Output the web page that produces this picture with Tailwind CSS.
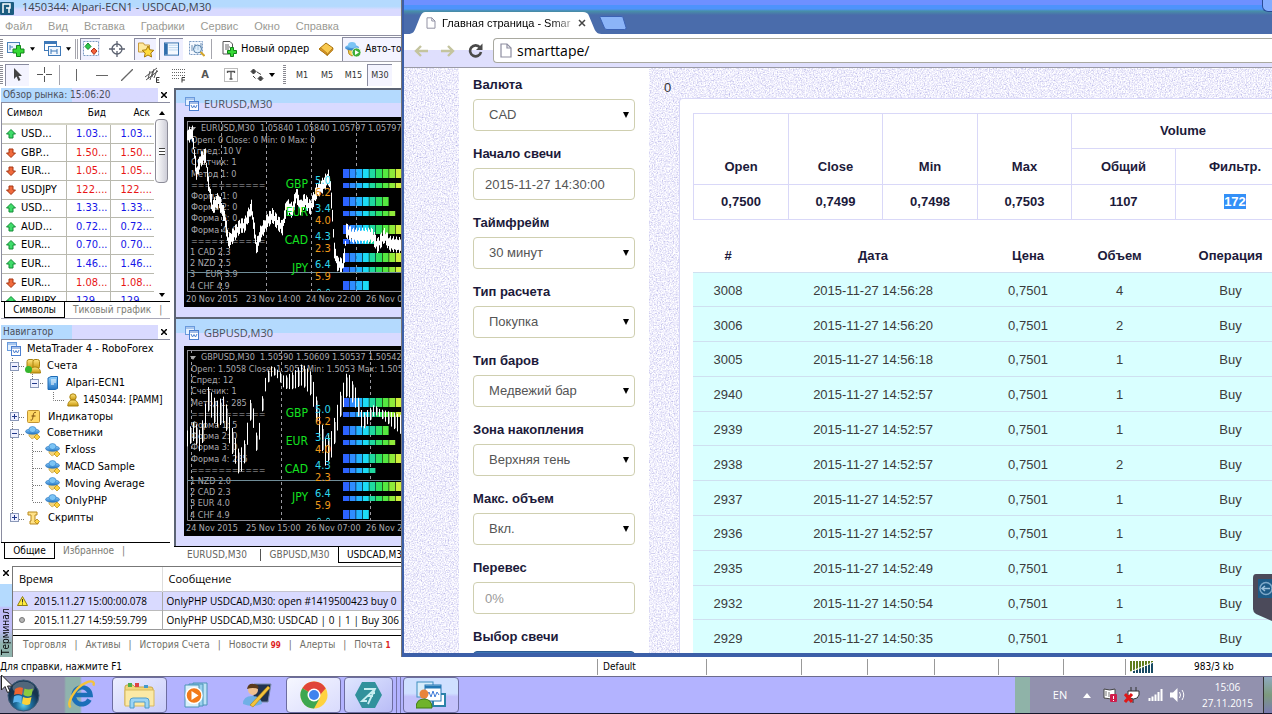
<!DOCTYPE html>
<html lang="ru">
<head>
<meta charset="utf-8">
<title>Главная страница - SmartTape</title>
<script src="https://cdn.jsdelivr.net/npm/@tailwindcss/browser@4"></script>
</head>
<body class="h-screen overflow-hidden bg-white font-['Open_Sans','Noto_Sans',sans-serif] text-[11px] leading-4 text-black">
<svg width="0" height="0" class="absolute">
  <defs>
    <filter id="grain" x="0" y="0" width="100%" height="100%">
      <feTurbulence type="fractalNoise" baseFrequency="0.75" numOctaves="3" seed="4"/>
      <feColorMatrix values="0.9 0.3 0 0 0.26  0.9 0.3 0 0 0.25  0.45 0.1 0 0 0.7  0 0 0 0 1"/>
    </filter>
    <linearGradient id="gold" x2="0" y2="1"><stop stop-color="#ffe680"/><stop offset="1" stop-color="#c8960c"/></linearGradient>
    <linearGradient id="sky" x2="0" y2="1"><stop stop-color="#8fd0ff"/><stop offset="1" stop-color="#2375c4"/></linearGradient>
    <radialGradient id="orb" cy=".8"><stop stop-color="#5fd0ee"/><stop offset=".5" stop-color="#1c6b9c"/><stop offset="1" stop-color="#16344f"/></radialGradient>
  </defs>
  <symbol id="up" viewBox="0 0 10 10"><path d="M5 .5 9.500 5H7v4H3V5H.5z" fill="#3fdc6a" stroke="#128a35"/></symbol>
  <symbol id="down" viewBox="0 0 10 10"><path d="M5 9.500.5 5H3V1h4v4h2.500z" fill="#f06a3c" stroke="#a53413"/></symbol>
  <symbol id="charts" viewBox="0 0 14 14"><rect x=".5" y=".5" width="9" height="8" fill="#e4f1ff" stroke="#6a9bdd"/><path d="M.5 2h9" stroke="#6a9bdd"/><rect x="4.500" y="4.500" width="9" height="9" fill="#fff" stroke="#4b7fd0"/><path d="M4.500 6h9M6 8l1.500 3L9 8.500l1.500 2.500L12 8" stroke="#4b7fd0" fill="none"/></symbol>
  <symbol id="hat" viewBox="0 0 16 14"><path d="M4 7h7l1 3-5 3-3-3z" fill="#f2d27a" stroke="#c29b35" stroke-width=".6"/><ellipse cx="7.500" cy="5.500" rx="7" ry="2.800" fill="url(#sky)" stroke="#1e6bb5" stroke-width=".6"/><ellipse cx="7.500" cy="3.500" rx="3.500" ry="3" fill="#7cc4f5" stroke="#2a7bc4" stroke-width=".6"/><path d="m12 8 3 3-3 3-3-3z" fill="#ffd23f" stroke="#b58a0c" stroke-width=".7"/></symbol>
  <symbol id="user" viewBox="0 0 12 14"><circle cx="6" cy="4" r="3.200" fill="url(#gold)" stroke="#a9820f"/><path d="M.8 13c0-4 2-6 5.200-6s5.200 2 5.200 6z" fill="url(#gold)" stroke="#a9820f"/></symbol>
  <symbol id="minusbox" viewBox="0 0 9 9"><rect x=".5" y=".5" width="8" height="8" fill="#eef0ff" stroke="#8a98b8"/><path d="M2 4.500h5" stroke="#223a8a"/></symbol>
  <symbol id="plusbox" viewBox="0 0 9 9"><rect x=".5" y=".5" width="8" height="8" fill="#eef0ff" stroke="#8a98b8"/><path d="M2 4.500h5M4.500 2v5" stroke="#223a8a"/></symbol>
  <symbol id="drop" viewBox="0 0 6 4"><path d="M0 0h6L3 4z"/></symbol>
  <symbol id="page" viewBox="0 0 12 15"><path d="M1 1h6l4 4v9H1z" fill="#fff" stroke="#8d8da0" stroke-width="1.200"/><path d="M7 1v4h4" fill="none" stroke="#8d8da0" stroke-width="1.200"/></symbol>
  <symbol id="grip" viewBox="0 0 3 20"><path d="M1.500 0v20" stroke="#8a8a92" stroke-width="3" stroke-dasharray="1 1"/></symbol>
</svg>

<div class="flex h-full flex-col">
 <div class="flex min-h-0 flex-1">

 <!-- MetaTrader -->
 <main class="flex w-[402px] shrink-0 flex-col overflow-hidden border-r border-[#777] bg-white font-['DejaVu_Sans_Condensed','Noto_Sans',sans-serif] text-[10px]">
  <header class="flex h-4 shrink-0 items-center gap-2 bg-gradient-to-b from-[#b4dafe] from-40% to-[#d9daff] to-60% font-['Open_Sans','Noto_Sans',sans-serif] text-[11px] leading-3 text-[#3c4250]">
   <svg class="h-[13px] w-[14px]" viewBox="0 0 14 13"><rect width="14" height="13" rx="1" fill="#1c5c80"/><path d="M3 11V2h7v4H6M9 6v5" stroke="#fff" stroke-width="1.500" fill="none"/></svg>
   <h1 class="pb-0.5 whitespace-nowrap">1450344: Alpari-ECN1 - USDCAD,M30</h1>
  </header>
  <nav class="flex h-5 shrink-0 items-center gap-4 border-b border-[#8e8ea0] pl-[5px] font-['Liberation_Sans',sans-serif] text-[11px] text-[#9a9a94]">
   <button>Файл</button><button>Вид</button><button>Вставка</button><button>Графики</button><button>Сервис</button><button>Окно</button><button>Справка</button>
  </nav>
  <div class="flex h-[26px] shrink-0 items-center border-b border-[#a5a5ad] text-[11px]">
   <svg class="h-5 w-[3px] shrink-0"><use href="#grip"/></svg>
   <button class="flex w-9 shrink-0 items-center justify-center gap-[5px]" aria-label="Новый график"><svg class="h-4 w-[18px]" viewBox="0 0 18 16"><rect x=".5" y="1.500" width="12" height="10" fill="#eaf4ff" stroke="#4b82b8"/><path d="M3 4v5M3 6h3" stroke="#4b82b8"/><path d="M9.500 4.500h4v3.500H17v4h-3.500V15.500h-4V12H6V8h3.500z" fill="#35d935" stroke="#12841a"/></svg><svg class="h-1 w-[5px]"><use href="#drop"/></svg></button>
   <button class="flex w-9 shrink-0 items-center justify-center gap-[5px]" aria-label="Профили"><svg class="h-4 w-[17px]" viewBox="0 0 17 16"><rect x=".5" y=".5" width="12" height="9" fill="#fff" stroke="#3d78b8"/><path d="M1 2h11" stroke="#3d78b8" stroke-width="2"/><rect x="4.500" y="5.500" width="12" height="9" fill="#f2f8ff" stroke="#3d78b8"/><path d="M7 8v5M7 10h6M13 8v5" stroke="#3d78b8"/></svg><svg class="h-1 w-[5px]"><use href="#drop"/></svg></button>
   <div class="mr-0.5 h-5 w-[3px] shrink-0 border-x border-[#a5a5ad]"></div>
   <button class="flex h-[22px] w-5 shrink-0 items-center justify-center border-t border-l border-[#8a8ca0] bg-[#f0f0ff]" aria-label="Обзор рынка"><svg class="h-4 w-4" viewBox="0 0 16 16"><rect x=".5" y=".5" width="15" height="14" fill="#fff" stroke="#7c9cc4" stroke-dasharray="2 1"/><path d="m5 2 3 3.500-3 3L2 5.500z" fill="#2fca4c" stroke="#16862c"/><path d="m11 7 3 3-3 3.500L8 10z" fill="#f2603a" stroke="#b0301a"/></svg></button>
   <button class="flex w-[34px] shrink-0 justify-center" aria-label="Окно данных"><svg class="h-4 w-4" viewBox="0 0 16 16" fill="none" stroke="#5c6270"><circle cx="8" cy="8" r="5" stroke-width="1.300"/><path d="M8 0v6M8 10v6M0 8h6M10 8h6" stroke-width="1.300"/></svg></button>
   <button class="flex h-[22px] w-[22px] shrink-0 items-center justify-center border-t border-l border-[#8a8ca0] bg-[#f0f0ff]" aria-label="Навигатор"><svg class="h-[18px] w-[18px]" viewBox="0 0 18 18"><path d="M1.500 3h5l1 2h5v7h-11z" fill="#ffe9a0" stroke="#c79a3b"/><path d="m11 6 1.800 3.800 4 .5-3 2.700.8 4-3.600-2-3.600 2 .8-4-3-2.700 4-.5z" fill="#ffdb3c" stroke="#a87808"/></svg></button>
   <button class="ml-[3px] flex h-[22px] w-6 shrink-0 items-center justify-center border-t border-l border-[#8a8ca0] bg-[#f0f0ff]" aria-label="Терминал"><svg class="h-[15px] w-[15px]" viewBox="0 0 16 15"><rect x=".5" y=".5" width="15" height="13" fill="#f5f9ff" stroke="#2f6dac"/><path d="M2.500 1v12" stroke="#2f6dac" stroke-width="3"/><path d="M5 3h10M5 5.500h10M5 8h10" stroke="#b8d4f0"/></svg></button>
   <button class="flex w-7 shrink-0 justify-center" aria-label="Тестер"><svg class="h-4 w-4" viewBox="0 0 16 16"><rect x=".5" y=".5" width="13" height="13" fill="#f5f9ff" stroke="#7c9cc4" stroke-dasharray="2 1"/><path d="M3 4v6M6 3v5M9 4v5M12 2v5" stroke="#6d8db0"/><circle cx="8.500" cy="8" r="4" fill="#cfe6fa99" stroke="#5580a8"/><path d="m11.500 11 4 4" stroke="#d4a52a" stroke-width="2"/></svg></button>
   <div class="h-5 shrink-0 border-l border-[#a5a5ad]"></div>
   <button class="ml-2.5 flex shrink-0 items-center gap-1 whitespace-nowrap"><svg class="h-4 w-[15px]" viewBox="0 0 15 16"><path d="M1 .5h7l2.500 2.500v10H1z" fill="#fff" stroke="#555"/><path d="M3 4h4M3 6h5M3 8h4" stroke="#666"/><path d="M8.500 6.500h3v3h3v3h-3v3h-3v-3h-3v-3h3z" fill="#35d935" stroke="#12841a"/></svg>Новый ордер</button>
   <button class="flex w-[33px] shrink-0 justify-center" aria-label="Редактор"><svg class="h-4 w-4" viewBox="0 0 16 16"><path d="m1 8 7-6 7 5-6 7z" fill="#f9c94e" stroke="#a8720e"/><path d="m1 8 8 6v-2L3 7zM9 14l6-7v2l-6 6z" fill="#d9962a" stroke="#a8720e" stroke-width=".6"/></svg></button>
   <button class="flex h-6 min-w-0 flex-1 items-center gap-[3px] overflow-hidden border-t border-l border-[#8a8ca0] bg-[#f4f4ff] pl-px text-[10px] whitespace-nowrap"><svg class="h-[17px] w-[18px] shrink-0" viewBox="0 0 18 17"><path d="M4 8h8l1 4-5 3-3-2z" fill="#f5cf50" stroke="#b58a1c"/><ellipse cx="8" cy="6.500" rx="7" ry="3" fill="url(#sky)"/><ellipse cx="8" cy="4" rx="4" ry="3" fill="#7cc4f5"/><circle cx="12.500" cy="11.500" r="4.500" fill="#3fae39" stroke="#fff" stroke-width=".8"/><path d="m11 9 4 2.500-4 2.500z" fill="#fff"/></svg>Авто-то</button>
  </div>
  <div class="flex h-[25px] shrink-0 items-center text-[9px] text-[#333]">
   <svg class="h-5 w-[3px] shrink-0"><use href="#grip"/></svg>
   <button class="ml-0.5 flex h-[22px] w-6 items-center justify-center border-t border-l border-[#8a8ca0] bg-[#f4f4ff]" aria-label="Курсор"><svg class="h-[14px] w-2" viewBox="0 0 8 14"><path d="M0 0v11l2.500-2.500L4.500 13l2-1L4.500 8H8z" fill="#444"/></svg></button>
   <button class="flex w-[30px] justify-center" aria-label="Перекрестие"><svg class="h-[15px] w-[15px]" viewBox="0 0 15 15"><path d="M7.500 0v6M7.500 9v6M0 7.500h6M9 7.500h6" stroke="#555"/></svg></button>
   <div class="h-5 border-l border-[#a5a5ad]"></div>
   <button class="flex w-[31px] justify-center" aria-label="Вертикальная линия"><svg class="h-3 w-3" viewBox="0 0 12 12"><path d="M6.500 0v12" stroke="#666"/></svg></button>
   <button class="flex w-[22px] justify-center" aria-label="Горизонтальная линия"><svg class="h-3 w-3" viewBox="0 0 12 12"><path d="M0 6.500h12" stroke="#666"/></svg></button>
   <button class="flex w-7 justify-center" aria-label="Трендовая линия"><svg class="h-3 w-3" viewBox="0 0 12 12"><path d="M0 12 12 0" stroke="#666" stroke-width="1.300"/></svg></button>
   <button class="flex w-6 justify-center" aria-label="Канал"><svg class="h-4 w-4" viewBox="0 0 16 16"><path d="M0 10 12 1M1 13 13 4M3 12 5 4M7 10 9 2M5 13 8 4M9 11l3-8" stroke="#555" fill="none"/><path d="M14.500 10.500h-3v5h3M11.500 13H14" stroke="#333" fill="none"/></svg></button>
   <button class="flex w-7 justify-center" aria-label="Фибоначчи"><svg class="h-4 w-4" viewBox="0 0 16 16"><path d="M1 2.500h13M1 5.500h13M1 8.500h13M1 11.500h7" stroke="#666" stroke-dasharray="1 1"/><path d="M14 10.500h-3v5M11 13h3" stroke="#333" fill="none"/></svg></button>
   <button class="w-6 text-[11px] font-bold text-[#555]">A</button>
   <button class="flex w-7 justify-center" aria-label="Метка"><svg class="h-3.5 w-3.5" viewBox="0 0 14 14"><rect x=".5" y=".5" width="13" height="13" fill="none" stroke="#777" stroke-dasharray="1 1"/><path d="M3.500 5V3.500h7V5M7 3.500V11M5.500 11h3" stroke="#555" stroke-width="1.300" fill="none"/></svg></button>
   <button class="flex w-[34px] items-center justify-center gap-[5px]" aria-label="Стрелки"><svg class="h-3.5 w-3.5" viewBox="0 0 14 14"><path d="m3.500 1 2.500 2.500L3.500 6 1 3.500zM10.500 8l2.500 2.500-2.500 2.500L8 10.500zM3 8l2.500 2.500M7 4l4 2.500" fill="#444" stroke="#444"/></svg><svg class="h-1 w-1.5"><use href="#drop"/></svg></button>
   <svg class="mx-1 h-5 w-[3px] shrink-0"><use href="#grip"/></svg>
   <button class="w-6">M1</button><button class="w-[26px]">M5</button><button class="w-[27px]">M15</button><button class="h-[22px] w-[25px] border-t border-l border-[#8a8ca0] bg-[#f4f4ff]">M30</button>
  </div>

  <div class="flex min-h-0 flex-1">
   <div class="flex w-[170px] shrink-0 flex-col pl-px">
    <!-- Market watch -->
    <section class="flex h-[232px] shrink-0 flex-col border-b border-[#a9a9b8]">
     <div class="flex h-[15px] items-center justify-between pr-[3px] text-[#4a4f5c]"><h2 class="h-3.5 w-[157px] bg-gradient-to-r from-[#b4dafe] from-45% to-[#d9daff] to-45% pl-0.5 leading-[14px]">Обзор рынка: 15:06:20</h2><button aria-label="Закрыть"><svg class="h-1.5 w-1.5" viewBox="0 0 6 6"><path d="m0 0 6 6M6 0 0 6" stroke="#000" stroke-width="1.500"/></svg></button></div>
     <div class="flex min-h-0 flex-1 overflow-hidden border-t border-l border-[#8a8ca0]">
      <table class="h-[208px] w-[152px] table-fixed border-collapse text-right text-[11px]">
       <thead class="text-[10px]"><tr class="h-[21px] border-b-2 border-[#d5d5c8]"><th class="w-16 pl-[5px] text-left font-normal">Символ</th><th class="w-11 pr-1 font-normal">Бид</th><th class="w-11 pr-1 font-normal">Аск</th></tr></thead>
       <tbody id="quotes"></tbody>
      </table>
      <div class="flex w-[15px] flex-col items-center"><svg class="mt-2 h-1 w-1.5 rotate-180"><use href="#drop"/></svg><div class="mt-1 flex h-[64px] w-[13px] items-center justify-center rounded-sm border border-[#8c8c98] bg-gradient-to-r from-white to-[#ceced8]"><div class="h-[7px] w-1.5 border-y border-[#444] bg-[linear-gradient(#fff_2px,#444_2px,#444_3px,#fff_3px)]"></div></div><svg class="mt-auto mb-1 h-1 w-1.5"><use href="#drop"/></svg></div>
     </div>
     <div class="flex h-[17px] shrink-0 items-center border-t border-black pl-[3px] whitespace-nowrap text-[#7b7b74]"><button class="h-4 w-[61px] shrink-0 border-x border-b border-black bg-white leading-[14px] text-black">Символы</button><button class="px-2">Тиковый график</button>|</div>
    </section>
    <!-- Navigator -->
    <section class="mt-[5px] flex min-h-0 flex-1 flex-col">
     <div class="flex h-[15px] shrink-0 items-center justify-between pr-[3px] text-[#4a4f5c]"><h2 class="h-3.5 w-[157px] bg-gradient-to-r from-[#b4dafe] from-45% to-[#d9daff] to-45% pl-0.5 leading-[14px]">Навигатор</h2><button aria-label="Закрыть"><svg class="h-1.5 w-1.5" viewBox="0 0 6 6"><path d="m0 0 6 6M6 0 0 6" stroke="#000" stroke-width="1.500"/></svg></button></div>
     <div class="relative min-h-0 flex-1 overflow-hidden border-t border-l border-[#8a8ca0] pt-px">
      <svg class="absolute top-0 left-0 h-[200px] w-20" viewBox="0 0 80 200" fill="none" stroke="#777" stroke-dasharray="1 1"><path d="M10.500 18v162M17 26.500h6M30.500 34v8M36 43.500h6M51.500 52v8.500H63M17 77.500h6M17 94.500h6M30.500 102v60M31 111.500h10M31 128.500h10M31 145.500h10M31 162.500h10M17 179.500h6"/></svg>
      <ul class="relative grid h-[185px] auto-rows-fr text-[11px] whitespace-nowrap [&>li]:flex [&>li]:items-center">
       <li class="gap-1.5 pl-[5px]"><svg class="h-3.5 w-3.5"><use href="#charts"/></svg>MetaTrader 4 - RoboForex</li>
       <li class="gap-1.5 pl-2"><svg class="h-[9px] w-[9px]"><use href="#minusbox"/></svg><svg class="h-[15px] w-4" viewBox="0 0 16 15"><rect x="2" y=".5" width="7" height="9" rx="2" fill="url(#gold)" stroke="#a9820f"/><rect x="8" y=".5" width="6.500" height="9" rx="2" fill="url(#gold)" stroke="#a9820f"/><path d="M5 14c0-4 2-6 5-6s5.500 2 5.500 6z" fill="url(#gold)" stroke="#a9820f"/><circle cx="3.500" cy="10.500" r="3.500" fill="#35b52e"/></svg>Счета</li>
       <li class="gap-2 pl-7"><svg class="h-[9px] w-[9px]"><use href="#minusbox"/></svg><svg class="h-3.5 w-[11px]" viewBox="0 0 11 14"><path d="M1 2 4 .5h6.500v12L8 13.500H1z" fill="url(#sky)" stroke="#1e6bb5"/><path d="M4 4h5M4 6h5M4 8h3" stroke="#fff"/></svg>Alpari-ECN1</li>
       <li class="gap-1 pl-[65px]"><svg class="h-3.5 w-3"><use href="#user"/></svg><span class="text-[10px]">1450344: [PAMM]</span></li>
       <li class="gap-2 pl-2"><svg class="h-[9px] w-[9px]"><use href="#plusbox"/></svg><svg class="h-[13px] w-[13px]" viewBox="0 0 13 13"><rect x=".5" y=".5" width="12" height="12" rx="1" fill="#ffd965" stroke="#c29432"/><path d="M9 2.500c-2-.5-2.500.5-3 4s-1 4-2.500 3.500M4.500 6h4" stroke="#7a4b0a" fill="none"/></svg>Индикаторы</li>
       <li class="gap-1.5 pl-2"><svg class="h-[9px] w-[9px]"><use href="#minusbox"/></svg><svg class="h-3.5 w-4"><use href="#hat"/></svg>Советники</li>
       <li class="gap-1 pl-[43px]"><svg class="h-3.5 w-4"><use href="#hat"/></svg>Fxloss</li>
       <li class="gap-1 pl-[43px]"><svg class="h-3.5 w-4"><use href="#hat"/></svg>MACD Sample</li>
       <li class="gap-1 pl-[43px]"><svg class="h-3.5 w-4"><use href="#hat"/></svg>Moving Average</li>
       <li class="gap-1 pl-[43px]"><svg class="h-3.5 w-4"><use href="#hat"/></svg>OnlyPHP</li>
       <li class="gap-2 pl-2"><svg class="h-[9px] w-[9px]"><use href="#plusbox"/></svg><svg class="h-3.5 w-[13px]" viewBox="0 0 13 14"><path d="M1 1h9v3H8v6h3v3H3v-3h1V4H1z" fill="#ffe28a" stroke="#b98a1e"/><path d="m10 8 2.500 2.500L10 13l-2.500-2.500z" fill="#ffd23f" stroke="#a87808" stroke-width=".7"/></svg>Скрипты</li>
      </ul>
     </div>
     <div class="mb-[7px] flex h-[17px] shrink-0 items-center border-t border-black pl-[3px] whitespace-nowrap text-[#7b7b74]"><button class="h-4 w-[51px] shrink-0 border-x border-b border-black bg-white leading-[14px] text-black">Общие</button><button class="px-2">Избранное</button>|</div>
    </section>
   </div>

   <!-- Chart windows -->
   <div class="ml-1 flex min-w-0 flex-1 flex-col pt-px">
    <div class="flex min-h-0 flex-1 flex-col bg-[#777] font-['Open_Sans','Noto_Sans',sans-serif] text-[11px]">
     <section class="flex min-h-0 flex-1 flex-col overflow-hidden border-t-2 border-l-2 border-[#5c6474] bg-[#d9daff]">
      <div class="flex h-[27px] shrink-0 items-center gap-[5px] bg-gradient-to-b from-[#b4dafe] from-50% to-[#d9daff] to-50% pl-[9px] text-[#4a4f5c]"><svg class="h-3.5 w-3.5"><use href="#charts"/></svg>EURUSD,M30</div>
      <svg id="eur" class="ml-2 h-[190px] w-[220px] shrink-0 bg-black" viewBox="12 31 220 190"></svg>
     </section>
     <section class="flex min-h-0 flex-1 flex-col overflow-hidden border-t-2 border-l-2 border-[#5c6474] bg-[#d9daff]">
      <div class="flex h-[27px] shrink-0 items-center gap-[5px] bg-gradient-to-b from-[#b4dafe] from-50% to-[#d9daff] to-50% pl-[9px] text-[#4a4f5c]"><svg class="h-3.5 w-3.5"><use href="#charts"/></svg>GBPUSD,M30</div>
      <svg id="gbp" class="ml-2 h-[190px] w-[220px] shrink-0 bg-black" viewBox="12 31 220 190"></svg>
     </section>
    </div>
    <div class="mb-[3px] flex h-[17px] shrink-0 items-center overflow-hidden border-t border-black whitespace-nowrap text-[#66665f]"><button class="w-[86px] shrink-0">EURUSD,M30</button><button class="h-3 w-[78px] shrink-0 border-l border-[#555] leading-3">GBPUSD,M30</button><button class="h-4 w-24 shrink-0 border-b border-l border-black bg-white pl-2 text-left text-black">USDCAD,M30</button></div>
   </div>
  </div>

  <!-- Terminal -->
  <section class="flex h-[91px] shrink-0">
   <div class="flex w-3 shrink-0 flex-col items-center"><button class="pt-1 pb-2" aria-label="Закрыть"><svg class="h-1.5 w-1.5" viewBox="0 0 6 6"><path d="m0 0 6 6M6 0 0 6" stroke="#000" stroke-width="1.500"/></svg></button><h2 class="w-3 flex-1 rotate-180 bg-[linear-gradient(0deg,#b4dafe_22px,#c0bdf8_24px,#c0bdf8_45px,#8fb3ad_60px)] pt-0.5 leading-3 [writing-mode:vertical-rl]">Терминал</h2></div>
   <div class="flex min-w-0 flex-1 flex-col overflow-hidden border-t border-l border-[#777]">
    <table class="w-full shrink-0 table-fixed border-collapse text-left font-['Open_Sans','Noto_Sans',sans-serif] text-[10px] whitespace-nowrap">
     <thead><tr class="h-6 border-b border-[#c5c5d0]"><th class="w-[149px] border-r border-[#ddd] pl-1.5 text-[11px] font-normal">Время</th><th class="pl-1.5 text-[11px] font-normal">Сообщение</th></tr></thead>
     <tbody>
      <tr class="h-[19px] border-b border-[#bbb] bg-[#d9daff]"><td class="border-r border-[#aaa] pl-1"><span class="flex items-center gap-1.5"><svg class="h-2.5 w-[11px]" viewBox="0 0 11 10"><path d="m5.500.5 5 9H.5z" fill="#ffec3d" stroke="#8f7d10"/><path d="M5.500 3v3.500M5.500 7.500v1" stroke="#333"/></svg>2015.11.27 15:00:00.078</span></td><td class="pl-1">OnlyPHP USDCAD,M30: open #1419500423 buy 0</td></tr>
      <tr class="h-[19px] border-b border-[#999]"><td class="border-r border-[#aaa] pl-1"><span class="flex items-center gap-1.5"><svg class="h-2.5 w-[11px]" viewBox="0 0 11 10"><circle cx="5" cy="5" r="2.500" fill="#b5b5b5" stroke="#777"/></svg>2015.11.27 14:59:59.799</span></td><td class="pl-1">OnlyPHP USDCAD,M30: USDCAD | 0 | 1 | Buy 306</td></tr>
     </tbody>
    </table>
    <div class="mt-[5px] flex flex-1 items-center gap-2 border-t border-black pb-0.5 pl-2.5 whitespace-nowrap text-[#6f6f68]"><button>Торговля</button>|<button>Активы</button>|<button>История Счета</button>|<button>Новости <b class="text-[8px] text-[#d22]">99</b></button>|<button>Алерты</button>|<button>Почта <b class="text-[8px] text-[#d22]">1</b></button></div>
   </div>
  </section>
 </main>

 <!-- Browser -->
 <section class="flex min-w-0 flex-1 flex-col border-b-4 border-l-2 border-[#3c5fa8] bg-[#4a6cab]">
  <div class="relative flex h-[34px] shrink-0 items-end bg-[linear-gradient(#6e90ff_5px,#4d93fc_5px,#4d93fc_9px,#4890a8_11px,#4a6cab_15px)] pl-1">
   <div class="relative h-[22px] w-[195px]">
    <svg class="absolute inset-0 h-full w-full" viewBox="0 0 195 22" preserveAspectRatio="none"><path d="M0 22c5 0 6-2 8-7l4-10c2-4 3-5 6-5h157c3 0 5 1 6 4l5 12c2 5 4 6 9 6z" fill="#fff"/></svg>
    <div class="relative flex h-full items-center pl-[18px]"><svg class="h-3 w-2.5"><use href="#page"/></svg><span class="ml-1.5 w-[130px] overflow-hidden bg-gradient-to-r from-black from-80% to-[#bbb] bg-clip-text font-['Liberation_Sans',sans-serif] text-[11px] whitespace-nowrap text-transparent">Главная страница - Smar</span><button class="ml-1.5" aria-label="Закрыть вкладку"><svg class="h-2 w-2" viewBox="0 0 8 8"><path d="m1 1 6 6M7 1 1 7" stroke="#444" stroke-width="1.500"/></svg></button></div>
   </div>
   <button class="mb-1 -ml-1 h-3.5 w-7" aria-label="Новая вкладка"><svg class="h-3.5 w-7" viewBox="0 0 28 14"><path d="M1 1.500Q1 .5 2 .5h20q1.500 0 2 1l3 10q.5 2-1.500 2H8q-2 0-2.500-1.500z" fill="#8bb4f8" stroke="#3b62b5"/></svg></button>
   <div class="absolute top-0 right-0 h-3 w-2.5 rounded-bl-md border-b border-l border-[#294b94] bg-[#83adff]"></div>
  </div>
  <div class="flex h-[34px] shrink-0 items-center border-b border-[#9a9aa5] bg-gradient-to-b from-white from-50% to-[#dfdffd] to-50% pl-2.5">
   <button class="w-[27px]" aria-label="Назад"><svg class="h-3 w-3.5" viewBox="0 0 14 12"><path d="M7 1 2 6l5 5M2 6h12" stroke="#c4c49e" stroke-width="2.400" fill="none"/></svg></button>
   <button class="w-[27px]" aria-label="Вперед"><svg class="h-3 w-3.5" viewBox="0 0 14 12"><path d="m7 1 5 5-5 5M12 6H0" stroke="#c4c49e" stroke-width="2.400" fill="none"/></svg></button>
   <button class="w-[25px]" aria-label="Обновить"><svg class="h-[15px] w-[15px]" viewBox="0 0 15 15"><path d="M12 4.500A5.500 5.500 0 1 0 13 9" stroke="#4a4a4a" stroke-width="2.600" fill="none"/><path d="M14.500.5v6.500H8z" fill="#4a4a4a"/></svg></button>
   <div class="flex h-[25px] flex-1 items-center gap-[5px] rounded-l-sm border border-r-0 border-[#a9a9a0] bg-white pl-1.5"><svg class="h-[15px] w-3"><use href="#page"/></svg><input aria-label="Адрес" class="flex-1 text-[14px] outline-none" value="smarttape/"></div>
  </div>
  <div class="relative min-h-0 flex-1 overflow-hidden bg-[#e6e5f9] font-['Liberation_Sans',sans-serif] text-[13px]">
   <svg class="absolute inset-0 h-full w-full"><rect width="100%" height="100%" filter="url(#grain)"/></svg>
   <div class="relative flex h-full pl-[55px] text-[#1c1a3a]">
    <form class="flex w-[190px] shrink-0 flex-col gap-[15px] bg-white px-3.5 pt-[9px]" id="filters"></form>
    <div class="flex min-w-0 flex-1 flex-col">
     <div class="h-[30px] shrink-0 pt-3 pl-[15px] text-[#333]">0</div>
     <div class="ml-[30px] flex-1 overflow-hidden rounded-tl-sm border-t border-l border-[#d9d8f8] bg-white pt-3.5 pl-[13px]">
      <table class="w-[602px] table-fixed border-collapse text-center font-bold [&_td]:border [&_td]:border-[#d9d8f8] [&_th]:border [&_th]:border-[#d9d8f8]">
       <colgroup><col class="w-[95px]"><col class="w-[94px]"><col class="w-[95px]"><col class="w-[94px]"><col class="w-[104px]"><col></colgroup>
       <thead class="align-bottom [&_th]:pb-[9px]">
        <tr class="h-[35px]"><th rowspan="2">Open</th><th rowspan="2">Close</th><th rowspan="2">Min</th><th rowspan="2">Max</th><th colspan="2">Volume</th></tr>
        <tr class="h-9"><th>Общий</th><th>Фильтр.</th></tr>
       </thead>
       <tbody><tr class="h-[35px]"><td>0,7500</td><td>0,7499</td><td>0,7498</td><td>0,7503</td><td>1107</td><td><span class="bg-[#3390f8] text-white">172</span></td></tr></tbody>
      </table>
      <table class="mt-[17px] h-[417px] w-[602px] table-fixed border-collapse text-center text-[#3b3b3b] [&_td]:pt-[3px] [&_th]:pt-[3px]">
       <thead class="text-[#1c1a3a]"><tr class="h-[35px]"><th class="w-[70px]">#</th><th class="w-[220px]">Дата</th><th class="w-[90px]">Цена</th><th class="w-[93px]">Объем</th><th>Операция</th></tr></thead>
       <tbody id="trades"></tbody>
      </table>
     </div>
    </div>
   </div>
   <button class="absolute right-0 bottom-8 h-[47px] w-5" aria-label="TeamViewer"><svg class="h-[47px] w-5" viewBox="0 0 20 47"><path d="M20 0H4Q1 0 1 4v31q0 3 3 5l16 7z" fill="#4b4a5a"/><rect x="6" y="5" width="18" height="19" fill="#1d5a86"/><circle cx="14" cy="14.500" r="6" fill="none" stroke="#7fa9c8" stroke-width="1.500"/><path d="m13 12-3 2.500 3 2.500M10 14.500h8" fill="none" stroke="#9cc0da" stroke-width="1.500"/></svg></button>
  </div>
 </section>
 </div>

 <!-- Status bar -->
 <footer class="flex h-[19px] shrink-0 items-center bg-white font-['DejaVu_Sans_Condensed','Noto_Sans',sans-serif] text-[10px] whitespace-nowrap [&>span]:h-4 [&>span]:border-l [&>span]:border-[#999]">
  <div class="w-[597px] shrink-0">Для справки, нажмите F1</div>
  <span class="w-[109px] pl-[5px]">Default</span><span class="w-[95px]"></span><span class="w-[66px]"></span><span class="w-[67px]"></span><span class="w-[64px]"></span><span class="w-[65px]"></span><span class="w-[62px]"></span>
  <span class="flex flex-1 items-center gap-10 pl-1"><svg class="h-3 w-6" viewBox="0 0 24 12"><path d="M1 0v11M4 0v11M7 0v11M10 0v11M13 0v11M16 0v11M19 0v11M22 0v11" stroke="#5f7d1c" stroke-width="2"/><path d="M4 12V9.500M7 12V9M10 12V7.500M13 12V6.500M16 12V5M19 12V4M22 12V2" stroke="#174a63" stroke-width="2"/><path d="M0 11 24 1" stroke="#fff"/></svg>983/3 kb</span>
 </footer>

 <!-- Taskbar -->
 <div class="flex h-[38px] shrink-0 items-stretch border-t border-b border-t-[#6c6c8c] border-b-[#16162a] bg-[linear-gradient(90deg,#9291ae_64px,#8fb3ad_66px,#8fb3ad_80px,#b3b3ff_82px)]">
  <button class="ml-1.5 flex w-[34px] items-center justify-center" aria-label="Пуск"><svg class="h-[33px] w-[33px]" viewBox="0 0 33 33"><circle cx="16.500" cy="16.500" r="15.500" fill="url(#orb)" stroke="#3c5c78"/><ellipse cx="16.500" cy="9" rx="11" ry="6.500" fill="#ffffff40"/><path d="M8 10q4-3 8-1l-1 7q-4-2-8 0z" fill="#f0642f"/><path d="M17.500 9.500q4 2 8.500 0l-1.500 7q-4 2-8-.5z" fill="#8ccb3e"/><path d="M7 17.500q4-2.500 8 0l-1 7q-4-2.500-8-.5z" fill="#5bb4ee"/><path d="M16 18q4 2 8.500 0L23 25q-4 2-8-.5z" fill="#fdd23a"/></svg></button>
  <button class="flex w-[72px] items-center justify-center pl-3" aria-label="Internet Explorer"><svg class="h-[30px] w-[30px]" viewBox="0 0 32 32"><path d="M24 21a9 9 0 1 1 1-5H9" fill="none" stroke="#1c6fb8" stroke-width="5"/><path d="M4 29C-1 26 8 8 20 3c7-3 10-1 8 3" fill="none" stroke="#f5c33a" stroke-width="2.500"/></svg></button>
  <button class="flex w-[55px] items-center justify-center rounded-sm border border-[#6d6da0] bg-gradient-to-br from-[#eceeff] to-[#c8cbfa]" aria-label="Проводник"><svg class="h-[27px] w-[31px]" viewBox="0 0 31 27"><path d="M1 5q0-2 2-2h6l2 2h16q2 0 2 2v16H1z" fill="#f0d67c" stroke="#c9a545"/><path d="M4 1h4v4H4z" fill="#4fb04a"/><path d="M11 1h4v4h-4z" fill="#d44"/><path d="M20 3h4v3h-4z" fill="#49c"/><path d="M1 8h29v16H1z" fill="#fbe9a6" stroke="#d8b95c"/><path d="M6 26v-7q0-3 3-3h13q3 0 3 3v7h-4v-6H10v6z" fill="#9bd4f4" stroke="#4f9ccc"/></svg></button>
  <button class="flex w-[60px] items-center justify-center" aria-label="Media Player"><svg class="h-[26px] w-[26px]" viewBox="0 0 26 26"><path d="M9 1h14v22H9z" fill="#bfe3f5" stroke="#4d94b8"/><path d="M5 2h14v22H5z" fill="#9ad1ee" stroke="#4d94b8"/><path d="M1 3h14v22H1z" fill="#d8f0fb" stroke="#4d94b8"/><circle cx="10" cy="13.500" r="8" fill="#f27a1a" stroke="#fff" stroke-width="1.500"/><path d="m7.500 9 7 4.500-7 4.500z" fill="#fff"/></svg></button>
  <button class="flex w-[59px] items-center justify-center" aria-label="Пользователь"><svg class="h-[26px] w-[30px]" viewBox="0 0 30 26"><path d="M12 2h17l-3 18H11z" fill="#22324e" stroke="#7d8cab"/><circle cx="11" cy="8" r="5" fill="#f0c090"/><path d="M5 7q1-6 7-5t4 5q-5-2-11 0z" fill="#5b3a1c"/><path d="M1 22q0-8 9-8t10 8q-9 4-19 0z" fill="#6fb0e6"/><path d="M8 23 26 4l2 2-17 19z" fill="#f5c33a" stroke="#a9820f" stroke-width=".6"/></svg></button>
  <button class="flex w-[55px] items-center justify-center rounded-sm border border-[#6d6da0] bg-gradient-to-br from-[#f6f7ff] to-[#d9dbfd]" aria-label="Chrome"><svg class="h-7 w-7" viewBox="0 0 28 28"><circle cx="14" cy="14" r="13.500" fill="#ffd23f"/><path d="M14 14 2.300 7.200A13.500 13.500 0 0 1 25.700 7.200z" fill="#e0453a"/><path d="M14 14 2.300 7.200A13.500 13.500 0 0 0 14 27.500l5.500-10z" fill="#3da751"/><path d="M14 7.200h11.700L20 14z" fill="#e0453a"/><circle cx="14" cy="14" r="6.500" fill="#fff"/><circle cx="14" cy="14" r="5" fill="#3f83ee"/></svg></button>
  <button class="ml-[3px] flex w-[49px] items-center justify-center rounded-sm border border-[#6d6da0] bg-gradient-to-br from-[#dfe6ff] to-[#b9bcf6]" aria-label="AF"><svg class="h-7 w-[29px]" viewBox="0 0 29 28"><path d="M8 1h13l7 13-7 13H8L1 14z" fill="#31919c"/><path d="M10 8h11l-7 15M21 8 8 20h5M14 15h5M17 12h4" stroke="#c7eef0" stroke-width="1.800" fill="none"/></svg></button>
  <div class="mr-0.5 ml-[3px] w-[5px] border-x border-[#7474a8]"></div>
  <button class="flex w-14 items-center justify-center rounded-sm border border-[#6d6da0] bg-gradient-to-b from-[#cfe0ff] from-45% to-[#c3c1fb] to-55%" aria-label="MetaTrader"><svg class="h-7 w-[30px]" viewBox="0 0 30 28"><rect x="1" y="1" width="16" height="15" fill="#d7ecfb" stroke="#3f8ec0"/><rect x="17" y="13" width="12" height="12" fill="#fff" stroke="#2b82a8" stroke-width="2"/><rect x="9" y="4" width="16" height="16" fill="#fff" stroke="#2478b5"/><path d="M9 6h16" stroke="#2478b5" stroke-width="3"/><path d="m11 14 2-3 2 5 2-6 2 6 2-5 2 3" fill="none" stroke="#3f7bd8"/><circle cx="8" cy="13" r="4.500" fill="#e8843b"/><path d="M0 27q0-9 8-9t8 9z" fill="#6fb32c" stroke="#3e7c13"/></svg></button>
  <div class="flex-1"></div>
  <div class="w-[15px] bg-[#8fb3a8]"></div>
  <div class="flex w-[242px] items-center bg-[#9291ae] text-white">
   <button class="w-[52px] pl-2 text-[11px]">EN</button>
   <button class="w-5 pl-px" aria-label="Скрытые значки"><svg class="h-[5px] w-2" viewBox="0 0 8 5"><path d="m4 0 4 5H0z" fill="#fff"/></svg></button>
   <svg class="h-4 w-4" viewBox="0 0 16 16"><path d="M2 2q6 2 11 0v8q-5 3-11 1z" fill="#fff" stroke="#444"/><path d="M4 4v5M7 5v5" stroke="#777"/><rect x="8" y="7" width="7" height="8" rx="1" fill="#d01c4c"/><path d="M11.500 9v3M11.500 13v1" stroke="#fff"/></svg>
   <svg class="ml-1.5 h-4 w-4" viewBox="0 0 16 16"><path d="M7 0v4M12 0v4M4 4h11v4q-1 4-5.500 4T4 8zM9 12v4" fill="#fff" stroke="#333"/><path d="m1 7 7 8M8 7l-7 8" stroke="#e01818" stroke-width="3"/></svg>
   <svg class="ml-2 h-3 w-4" viewBox="0 0 16 12"><path d="M1.500 12V9M4.500 12V7.500M7.500 12V5.500M10.500 12V3M13.500 12V0" stroke="#fff" stroke-width="2"/></svg>
   <svg class="ml-1.5 h-3.5 w-4" viewBox="0 0 16 14"><path d="M0 4.500h3L7.500 0v14L3 9.500H0z" fill="#fff"/><path d="M9.500 4q2 3 0 6M12 2q3.500 5 0 10" stroke="#fff" fill="none"/></svg>
   <button class="ml-1.5 flex-1 text-center text-[10px] leading-4">15:06<br>27.11.2015</button>
   <button class="h-full w-[9px] border-l border-[#333] bg-gradient-to-b from-[#8fa9c0] via-[#7d9a7d] to-[#7a7ab0]" aria-label="Показать рабочий стол"></button>
  </div>
 </div>
</div>
<svg class="pointer-events-none fixed top-[674px] left-px h-[19px] w-3" viewBox="0 0 12 19"><path d="M.5 1v15l3.500-3.500L6.500 18.500l2.500-1-2.500-5.500h5z" fill="#fff" stroke="#222"/></svg>

<script>
const el = id => document.getElementById(id);

el('quotes').innerHTML = [
  ['USD...',1,'1.03...'],['GBP...',0,'1.50...'],['EUR...',0,'1.05...'],['USDJPY',0,'122....'],['USD...',1,'1.33...'],
  ['AUD...',1,'0.72...'],['EUR...',1,'0.70...'],['EUR...',1,'1.46...'],['EUR...',0,'1.08...'],['EURJPY',1,'129....']
].map(([s,u,p]) => `<tr class="border-b border-[#b9b9ae] leading-3"><td class="border-r border-[#b9b9ae] pl-1"><span class="flex items-center gap-[5px]"><svg class="h-2.5 w-2.5"><use href="#${u?'up':'down'}"/></svg>${s}</span></td>` +
  `<td class="border-r border-[#b9b9ae] pr-0.5 ${u?'text-[#1515e8]':'text-[#e81515]'}">${p}</td><td class="pr-0.5 ${u?'text-[#1515e8]':'text-[#e81515]'}">${p}</td></tr>`).join('');

const box = 'h-8 w-full rounded border border-[#cfcfb0] bg-white text-[#555] outline-none';
el('filters').innerHTML = [
  ['Валюта','CAD',1],['Начало свечи','2015-11-27 14:30:00',0],['Таймфрейм','30 минут',1],['Тип расчета','Покупка',1],
  ['Тип баров','Медвежий бар',1],['Зона накопления','Верхняя тень',1],['Макс. объем','Вкл.',1],['Перевес','0%',2]
].map(([l,v,k],i) => `<div class="relative"><label for="f${i}" class="mb-1.5 block font-bold">${l}</label>` +
  (k===1 ? `<select id="f${i}" class="${box} appearance-none pl-[15px]"><option>${v}</option></select><svg class="absolute right-1.5 bottom-[13px] h-1.5 w-1.5" viewBox="0 0 6 6"><path d="M0 0h6L3 6z"/></svg>`
   : `<input id="f${i}" class="${box} pl-[11px] placeholder:text-[#999]" ${k===2?'placeholder':'value'}="${v}">`) + '</div>').join('') +
  '<div><label for="pick" class="mb-1.5 block font-bold">Выбор свечи</label><button type="button" id="pick" class="h-8 w-full rounded border border-[#2e5c94] bg-[#3c74b4]"></button></div>';

el('trades').innerHTML = [
  [3008,'14:56:28',4],[3006,'14:56:20',2],[3005,'14:56:18',1],[2940,'14:52:57',1],[2939,'14:52:57',1],[2938,'14:52:57',2],
  [2937,'14:52:57',1],[2936,'14:52:57',1],[2935,'14:52:49',1],[2932,'14:50:54',1],[2929,'14:50:35',1]
].map(r => `<tr class="border-t border-[#cfe0f0] bg-[#d9ffff]"><td>${r[0]}</td><td>2015-11-27 ${r[1]}</td><td>0,7501</td><td>${r[2]}</td><td>Buy</td></tr>`).join('');

/* Price charts: grid, captions, strength bars and candles */
const hues = ['#2c63ff','#2f8dff','#22b4ff','#1cdcf5','#1fd9a0','#2ee060','#55e840','#90ea3a','#d0ee3c'];
function chart(id, o) {
  let s = '<g font-family="DejaVu Sans Condensed, Noto Sans, sans-serif">';
  o.grid.forEach(x => s += `<path d="M${x}.5 35V205" stroke="#9a9aa0" stroke-dasharray="3 3"/>`);
  s += '<path d="M15.500 35V205.500H232M15 35.500h217" stroke="#8c8c94" fill="none"/><path d="M18 41h6l-3 4z" fill="#aaa"/>';
  s += '<g fill="#a9a9ae" font-size="9">' + `<text x="29" y="45" xml:space="preserve">${o.head}</text>`;
  o.lines.forEach((t,i) => s += `<text x="${i>9?18:19}" y="${57+Math.round(i*11.2)}" xml:space="preserve">${t}</text>`);
  o.dates.forEach((t,i) => s += `<text x="${14+i*60}" y="216">${t}</text>`);
  s += '</g>';
  [[9,9],[7,8],[9,5],[9,9],[4,0]].forEach((n,r) => {
    for (let i=0;i<9;i++) {
      const x = 171+i*6.6, y = 83+r*28;
      if (i<n[0]) s += `<rect x="${x}" y="${y}" width="6" height="9" fill="${hues[i]}"/>`;
      if (i<n[1]) s += `<rect x="${x}" y="${y+14}" width="6" height="5" fill="${hues[i]}"/>`;
    }
  });
  for (let x=15; x<232; x+=o.step) {
    const i = Math.max(1, o.path.findIndex(p => p[0]>=x)), q = o.path[i-1], p = o.path[i];
    const y = q[1]+(p[1]-q[1])*(x-q[0])/(p[0]-q[0]), h = o.amp*(.4+Math.abs(Math.sin(x*7.3)));
    s += `<path d="M${x}.5 ${(y-h).toFixed(1)}V${(y+h*.9).toFixed(1)}" stroke="#fff"/>`;
    if (o.step>1 && x%2===0) s += `<path d="M${x+1}.5 ${(y-h*.7).toFixed(1)}V${(y+h*.8).toFixed(1)}" stroke="#8a8a8a"/>`;
  }
  s += `<path d="M15 ${o.bid}.5H232" stroke="#6f8c98"/>`;
  ['GBP','EUR','CAD','JPY'].forEach((t,i) => s += `<text x="136" y="${102+i*28}" text-anchor="end" font-size="12" fill="#14e020">${t}</text>`);
  [['5.0','6.2'],['3.4','4.0'],['4.3','2.3'],['6.4','5.9']].forEach((t,i) => s += `<text x="143" y="${98+i*28}" font-size="11" fill="#2fd8ee">${t[0]}</text><text x="143" y="${110+i*28}" font-size="11" fill="#f09a1a">${t[1]}</text>`);
  s += '<path d="M145 204.500q2-3 4 0M154 204.500q2-3 4 0" stroke="#2fd8ee" fill="none"/></g>';
  el(id).innerHTML = s;
}
const eq = '===========';
chart('eur', {
  grid:[49,94,139,184], head:'EURUSD,M30  1.05840 1.05840 1.05797 1.05797', bid:186, step:1, amp:6,
  lines:['Open: 0 Close: 0 Min: 0 Max: 0','Спред: 10 V','Счетчик: 1','Метод 1: 0',eq,'Форма 1: 0','Форма 2: 0','Форма 3: 0','Форма 4: 0',eq,'1 CAD 2.3','2 NZD 2.5','3    EUR 3.9','4 CHF 4.9'],
  dates:['20 Nov 2015','23 Nov 14:00','24 Nov 22:00','26 Nov 0'],
  path:[[14,50],[20,48],[24,88],[28,74],[33,70],[36,98],[40,122],[46,114],[52,130],[56,156],[62,148],[68,140],[72,140],[79,122],[82,145],[84,162],[88,148],[95,135],[100,130],[106,138],[110,142],[114,120],[120,125],[124,108],[128,122],[132,115],[138,122],[144,106],[150,100],[156,92],[158,100],[160,130],[162,165],[165,178],[170,180],[172,170],[174,145],[180,150],[200,150],[205,160],[212,150],[217,158],[232,160]]
});
chart('gbp', {
  grid:[19,109,198], head:'GBPUSD,M30  1.50590 1.50609 1.50537 1.50542', bid:165, step:3, amp:10,
  lines:['Open: 1.5058 Close: 1.5053 Min: 1.5053 Max: 1.5059','Спред: 12','Счетчик: 1','Метод 1: 285',eq,'Форма 1: 5','Форма 2: 0','Форма 3: 0','Форма 4: 285',eq,'1 NZD 2.0','2 CAD 2.3','3 EUR 4.0','4 CHF 4.9'],
  dates:['24 Nov 2015','25 Nov 15:00','26 Nov 07:00','26 Nov 2'],
  path:[[14,125],[22,116],[28,128],[36,85],[44,100],[52,95],[58,120],[67,150],[73,135],[79,88],[85,135],[91,80],[94,65],[100,55],[106,60],[112,68],[121,66],[130,60],[139,70],[145,100],[153,138],[159,130],[168,90],[175,68],[184,85],[190,108],[202,95],[214,102],[232,112]]
});
</script>
</body>
</html>
